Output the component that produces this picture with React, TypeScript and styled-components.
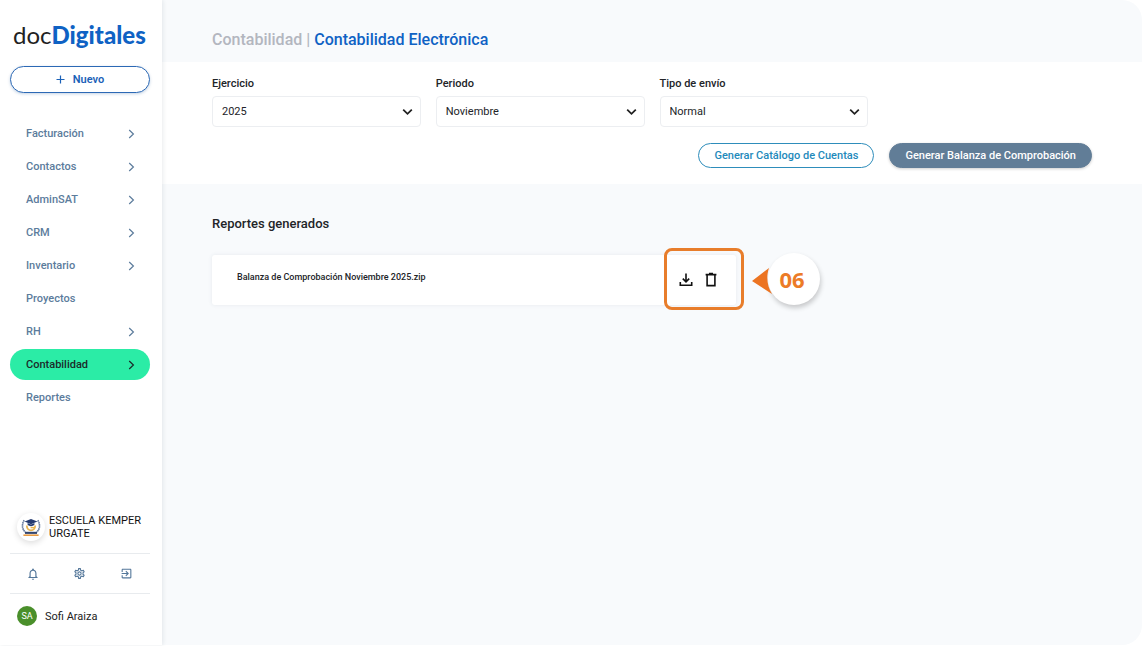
import React from "react";
import styled, { createGlobalStyle } from "styled-components";

const GlobalStyle = createGlobalStyle`
  *, *::before, *::after { box-sizing: border-box; }
  body {
    margin: 0;
    background: #fff;
    color: #222428;
    font-family: Roboto, "Liberation Sans", sans-serif;
    font-size: 11px;
    line-height: 13px;
  }
  button, select { font: inherit; }
  h1, h2, p, ul { margin: 0; padding: 0; }
`;

const Page = styled.div`
  display: flex;
  min-height: 100vh;
  padding-bottom: 1px;
`;

const Sidebar = styled.aside`
  position: relative;
  display: flex;
  flex: 0 0 162px;
  flex-direction: column;
  padding: 20px 12px 0 10px;
  background: #fff;
  box-shadow: 1px 0 4px rgba(40, 60, 80, 0.1);
`;

const Logo = styled.a`
  padding-left: 3px;
  color: #222;
  font: 400 24px/30px Lato, "Open Sans", sans-serif;
  text-decoration: none;
  strong {
    color: #0f62c4;
    font-weight: 900;
  }
`;

const NewButton = styled.button`
  display: flex;
  align-items: center;
  justify-content: center;
  gap: 8px;
  height: 27px;
  margin: 16px 0 25px;
  border: 1px solid #2c69b5;
  border-radius: 14px;
  background: #fff;
  box-shadow: 0 1px 3px rgba(20, 80, 150, 0.25);
  color: #1c62b8;
  font-weight: 600;
`;

const NavList = styled.ul`
  display: flex;
  flex-direction: column;
  gap: 2px;
  list-style: none;
`;

const NavLink = styled.a<{ $active?: boolean }>`
  display: flex;
  align-items: center;
  justify-content: space-between;
  height: 31px;
  padding: 0 15px 0 16px;
  border-radius: 16px;
  background: ${(p) => (p.$active ? "#2beca6" : "transparent")};
  color: ${(p) => (p.$active ? "#1c2b2a" : "#5c7c9c")};
  font-weight: 500;
  text-decoration: none;
`;

const SidebarFooter = styled.div`
  margin-top: auto;
`;

const Company = styled.div`
  display: flex;
  align-items: center;
  gap: 4px;
  padding: 0 0 12px 7px;
  color: #111;
`;

const CompanyLogo = styled.span`
  display: grid;
  flex: none;
  place-items: center;
  width: 28px;
  height: 28px;
  border-radius: 50%;
  background: #fff;
  box-shadow: 0 2px 6px rgba(0, 0, 0, 0.14);
`;

const Tools = styled.div`
  display: grid;
  grid-template-columns: repeat(3, 1fr);
  height: 41px;
  border: solid #e8ebee;
  border-width: 1px 0;
`;

const ToolButton = styled.button`
  display: grid;
  place-items: center;
  padding: 0;
  border: 0;
  background: none;
  color: #54779a;
`;

const User = styled.div`
  display: flex;
  align-items: center;
  gap: 8px;
  padding: 12px 0 19px 7px;
  color: #222;
`;

const Avatar = styled.span`
  display: grid;
  place-items: center;
  width: 20px;
  height: 20px;
  border-radius: 50%;
  background: #4a8f2b;
  color: #fff;
  font-size: 9px;
`;

const Main = styled.main`
  flex: 1;
  min-width: 0;
  border-radius: 0 20px 20px 0;
  background: #f8fafc;
`;

const Header = styled.header`
  padding: 30px 50px 12px;
`;

const Title = styled.h1`
  color: #b3b6bf;
  font-size: 16px;
  font-weight: 500;
  line-height: 20px;
  span { color: #0f62c4; }
`;

const Filters = styled.form`
  padding: 15px 50px 16px;
  background: #fff;
`;

const Fields = styled.div`
  display: grid;
  grid-template-columns: repeat(4, 1fr);
  gap: 15px;
`;

const Field = styled.div`
  label {
    display: block;
    margin-bottom: 6px;
    font-weight: 500;
  }
`;

const SelectBox = styled.div`
  position: relative;
  svg {
    position: absolute;
    top: 12px;
    right: 8px;
    pointer-events: none;
  }
`;

const Select = styled.select`
  display: block;
  width: 100%;
  height: 31px;
  padding: 0 24px 0 9px;
  border: 1px solid #eceef1;
  border-radius: 4px;
  appearance: none;
  background: #fff;
  color: #222428;
`;

const Actions = styled.div`
  display: flex;
  justify-content: flex-end;
  gap: 15px;
  margin-top: 16px;
`;

const ActionButton = styled.button<{ $filled?: boolean }>`
  height: 25px;
  padding: 0 15px;
  border: 1px solid ${(p) => (p.$filled ? "#617d97" : "#2e8dbb")};
  border-radius: 13px;
  background: ${(p) => (p.$filled ? "#617d97" : "#fff")};
  box-shadow: ${(p) => (p.$filled ? "0 1px 3px rgba(0, 0, 0, 0.2)" : "none")};
  color: ${(p) => (p.$filled ? "#fff" : "#1f8abb")};
  font-weight: 500;
`;

const Reports = styled.section`
  padding: 32px 50px;
`;

const ReportsTitle = styled.h2`
  font-size: 13px;
  font-weight: 500;
  line-height: 16px;
`;

const ReportCard = styled.article`
  position: relative;
  display: flex;
  justify-content: space-between;
  max-width: 524px;
  height: 50px;
  margin-top: 23px;
  padding: 0 17px 0 25px;
  border-radius: 3px;
  background: #fff;
  box-shadow: 0 0 4px rgba(60, 80, 100, 0.09);
`;

const FileName = styled.p`
  padding-top: 16px;
  font-size: 9px;
  font-weight: 500;
`;

const FileActions = styled.div`
  display: flex;
  align-items: center;
  gap: 9px;
`;

const FileButton = styled.button`
  display: grid;
  padding: 0;
  border: 0;
  background: none;
  color: #111;
`;

const Highlight = styled.div`
  position: absolute;
  top: -7px;
  right: -8px;
  width: 80px;
  height: 62px;
  border: 3px solid #e87d2b;
  border-radius: 8px;
  pointer-events: none;
`;

const Callout = styled.div`
  position: absolute;
  top: -2px;
  left: calc(100% + 32px);
  display: grid;
  place-items: center;
  width: 52px;
  height: 52px;
  padding-right: 4px;
  border-radius: 50%;
  background: #fff;
  box-shadow: 1px 3px 5px rgba(0, 0, 0, 0.2);
  color: #ec7b27;
  font: 700 22px/28px "Open Sans", "Noto Sans", sans-serif;
  svg {
    position: absolute;
    top: 14px;
    left: -16px;
  }
`;

const Chevron = () => (
  <svg width="7" height="10" viewBox="0 0 7 10" fill="none" stroke="currentColor" strokeWidth="1.2" aria-hidden="true">
    <path d="M1.2 1 5.4 5 1.2 9" />
  </svg>
);

const ArrowDown = () => (
  <svg width="11" height="8" viewBox="0 0 11 8" fill="none" stroke="#222" strokeWidth="1.8" aria-hidden="true">
    <path d="M1.2 1.6 5.5 5.8 9.8 1.6" />
  </svg>
);

const SchoolCrest = () => (
  <svg width="20" height="20" viewBox="0 0 20 20" fill="none" aria-hidden="true">
    <path d="M3.2 3.2C.8 7 .7 12 4.4 15.2M16.8 3.2c2.4 3.8 2.5 8.8-1.2 12" stroke="#62779b" strokeWidth="1.6" strokeDasharray="1.6 .5" />
    <path d="M5.8 8.6c0 6.4 8.4 6.4 8.4 0" stroke="#e8b44f" strokeWidth="1.8" />
    <path d="M9.6 10.6h4.4" stroke="#e8b44f" strokeWidth="1.4" />
    <path d="M3.6 4.6 10 2l6.4 2.6L10 7.2z" fill="#243a70" />
    <path d="M6.6 5.9v2.2c1.8 1.4 5 1.4 6.8 0V5.9L10 7.4z" fill="#243a70" />
    <path d="M4 14.8h12v2.1H4z" fill="#34466f" />
    <path d="M2.4 18.2h15.2" stroke="#e89b43" strokeWidth="1.6" />
  </svg>
);

const BellIcon = () => (
  <svg width="14" height="14" viewBox="0 0 24 24" fill="currentColor" aria-hidden="true">
    <path d="M12 22c1.1 0 2-.9 2-2h-4c0 1.1.9 2 2 2zm6-6v-5c0-3.07-1.63-5.64-4.5-6.32V4c0-.83-.67-1.5-1.5-1.5s-1.5.67-1.5 1.5v.68C7.64 5.36 6 7.92 6 11v5l-2 2v1h16v-1l-2-2zm-2 1H8v-6c0-2.48 1.51-4.5 4-4.5s4 2.02 4 4.5v6z" />
  </svg>
);

const GearIcon = () => (
  <svg width="13" height="13" viewBox="0 0 24 24" fill="currentColor" aria-hidden="true">
    <path d="M19.43 12.98c.04-.32.07-.64.07-.98s-.03-.66-.07-.98l2.11-1.65c.19-.15.24-.42.12-.64l-2-3.46c-.12-.22-.39-.3-.61-.22l-2.49 1c-.52-.4-1.08-.73-1.69-.98l-.38-2.65A.49.49 0 0 0 14 2h-4c-.25 0-.46.18-.49.42l-.38 2.65c-.61.25-1.17.59-1.69.98l-2.49-1c-.23-.09-.49 0-.61.22l-2 3.46c-.13.22-.07.49.12.64l2.11 1.65c-.04.32-.07.65-.07.98s.03.66.07.98l-2.11 1.65c-.19.15-.24.42-.12.64l2 3.46c.12.22.39.3.61.22l2.49-1c.52.4 1.08.73 1.69.98l.38 2.65c.03.24.24.42.49.42h4c.25 0 .46-.18.49-.42l.38-2.65c.61-.25 1.17-.59 1.69-.98l2.49 1c.23.09.49 0 .61-.22l2-3.46c.12-.22.07-.49-.12-.64l-2.11-1.65zm-1.98-1.71c.04.31.05.52.05.73s-.02.43-.05.73l-.14 1.13.89.7 1.08.84-.7 1.21-1.27-.51-1.04-.42-.9.68c-.43.32-.84.56-1.25.73l-1.06.43-.16 1.13-.2 1.35h-1.4l-.35-2.48-1.06-.43c-.43-.18-.83-.41-1.23-.71l-.91-.7-1.06.43-1.27.51-.7-1.21 1.97-1.54-.14-1.13c-.03-.31-.05-.54-.05-.74s.02-.43.05-.73l.14-1.13-1.97-1.54.7-1.21 2.31.93.9-.68c.43-.32.84-.56 1.25-.73l1.06-.43.36-2.48h1.39l.35 2.48 1.06.43c.43.18.83.41 1.23.71l.91.7 2.33-.94.7 1.21-1.96 1.55.14 1.13zM12 8c-2.21 0-4 1.79-4 4s1.79 4 4 4 4-1.79 4-4-1.79-4-4-4zm0 6c-1.1 0-2-.9-2-2s.9-2 2-2 2 .9 2 2-.9 2-2 2z" />
  </svg>
);

const ExitIcon = () => (
  <svg width="13" height="13" viewBox="0 0 24 24" fill="currentColor" aria-hidden="true">
    <path d="M10.09 15.59 11.5 17l5-5-5-5-1.41 1.41L12.67 11H3v2h9.67l-2.58 2.59zM19 3H5c-1.11 0-2 .9-2 2v4h2V5h14v14H5v-4H3v4c0 1.1.89 2 2 2h14c1.1 0 2-.9 2-2V5c0-1.1-.9-2-2-2z" />
  </svg>
);

const DownloadIcon = () => (
  <svg width="16" height="16" viewBox="0 0 16 16" fill="none" stroke="currentColor" strokeWidth="1.6" aria-hidden="true">
    <path d="M8 1.6v8M4.8 6.6 8 9.8 11.2 6.6M2.3 10v3.3h11.4V10" />
  </svg>
);

const TrashIcon = () => (
  <svg width="16" height="16" viewBox="0 0 16 16" fill="none" stroke="currentColor" strokeWidth="1.6" aria-hidden="true">
    <path d="M2.6 2.6h10.8M6 1.6h4M4.1 3.2v10.4h7.8V3.2" />
  </svg>
);

const navItems = [
  { label: "Facturación", expandable: true },
  { label: "Contactos", expandable: true },
  { label: "AdminSAT", expandable: true },
  { label: "CRM", expandable: true },
  { label: "Inventario", expandable: true },
  { label: "Proyectos", expandable: false },
  { label: "RH", expandable: true },
  { label: "Contabilidad", expandable: true, active: true },
  { label: "Reportes", expandable: false },
];

const filters = [
  { id: "ejercicio", label: "Ejercicio", value: "2025" },
  { id: "periodo", label: "Periodo", value: "Noviembre" },
  { id: "tipo-envio", label: "Tipo de envío", value: "Normal" },
];

export default function App() {
  return (
    <>
      <GlobalStyle />
      <Page>
        <Sidebar>
          <Logo href="#">doc<strong>Digitales</strong></Logo>
          <NewButton type="button">
            <svg width="9" height="9" viewBox="0 0 9 9" stroke="currentColor" strokeWidth="1.2" aria-hidden="true">
              <path d="M4.5 .5v8M.5 4.5h8" />
            </svg>
            Nuevo
          </NewButton>
          <nav>
            <NavList>
              {navItems.map((item) => (
                <li key={item.label}>
                  <NavLink href="#" $active={item.active}>
                    {item.label}
                    {item.expandable && <Chevron />}
                  </NavLink>
                </li>
              ))}
            </NavList>
          </nav>
          <SidebarFooter>
            <Company>
              <CompanyLogo><SchoolCrest /></CompanyLogo>
              ESCUELA KEMPER URGATE
            </Company>
            <Tools>
              <ToolButton type="button" aria-label="Notificaciones"><BellIcon /></ToolButton>
              <ToolButton type="button" aria-label="Configuración"><GearIcon /></ToolButton>
              <ToolButton type="button" aria-label="Salir"><ExitIcon /></ToolButton>
            </Tools>
            <User>
              <Avatar>SA</Avatar>
              Sofi Araiza
            </User>
          </SidebarFooter>
        </Sidebar>
        <Main>
          <Header>
            <Title>Contabilidad | <span>Contabilidad Electrónica</span></Title>
          </Header>
          <Filters>
            <Fields>
              {filters.map((f) => (
                <Field key={f.id}>
                  <label htmlFor={f.id}>{f.label}</label>
                  <SelectBox>
                    <Select id={f.id} defaultValue={f.value}>
                      <option>{f.value}</option>
                    </Select>
                    <ArrowDown />
                  </SelectBox>
                </Field>
              ))}
            </Fields>
            <Actions>
              <ActionButton type="button">Generar Catálogo de Cuentas</ActionButton>
              <ActionButton type="button" $filled>Generar Balanza de Comprobación</ActionButton>
            </Actions>
          </Filters>
          <Reports>
            <ReportsTitle>Reportes generados</ReportsTitle>
            <ReportCard>
              <FileName>Balanza de Comprobación Noviembre 2025.zip</FileName>
              <FileActions>
                <FileButton type="button" aria-label="Descargar"><DownloadIcon /></FileButton>
                <FileButton type="button" aria-label="Eliminar"><TrashIcon /></FileButton>
              </FileActions>
              <Highlight />
              <Callout>
                <svg width="20" height="28" viewBox="0 0 20 28" aria-hidden="true">
                  <path d="M0 14 17 1C14 10 15 19 20 27z" fill="#ec7422" />
                </svg>
                06
              </Callout>
            </ReportCard>
          </Reports>
        </Main>
      </Page>
    </>
  );
}
